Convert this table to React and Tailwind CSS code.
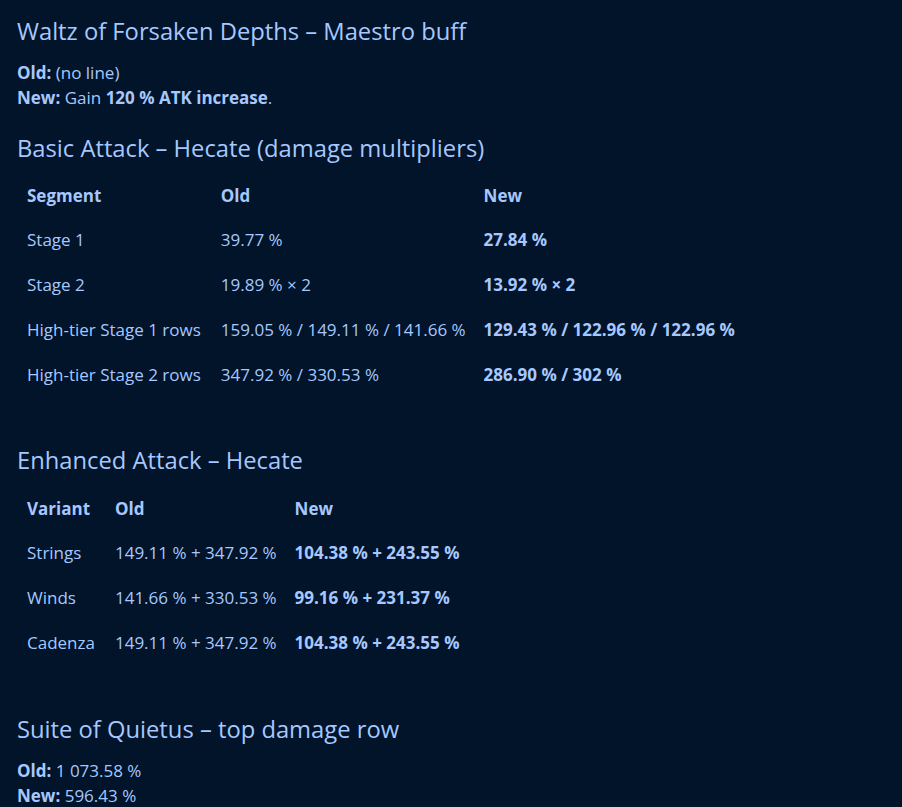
const basicRows = [
  ['Stage 1', '39.77 %', '27.84 %'],
  ['Stage 2', '19.89 % × 2', '13.92 % × 2'],
  ['High-tier Stage 1 rows', '159.05 % / 149.11 % / 141.66 %', '129.43 % / 122.96 % / 122.96 %'],
  ['High-tier Stage 2 rows', '347.92 % / 330.53 %', '286.90 % / 302 %'],
];

const enhancedRows = [
  ['Strings', '149.11 % + 347.92 %', '104.38 % + 243.55 %'],
  ['Winds', '141.66 % + 330.53 %', '99.16 % + 231.37 %'],
  ['Cadenza', '149.11 % + 347.92 %', '104.38 % + 243.55 %'],
];

function Heading({ children, className = '' }) {
  return (
    <h2 className={`text-[23.75px] leading-[32px] font-normal ${className}`}>
      {children}
    </h2>
  );
}

function DiffTable({ head, rows, className = '' }) {
  return (
    <table className={`border-collapse ${className}`}>
      <thead>
        <tr>
          {head.map((h) => (
            <th key={h} className="px-[10px] pt-[10px] pb-[9px] text-left font-bold leading-[25px]">
              {h}
            </th>
          ))}
        </tr>
      </thead>
      <tbody>
        {rows.map(([label, oldVal, newVal]) => (
          <tr key={label}>
            <td className="px-[10px] py-[10px] leading-[25px] whitespace-nowrap">{label}</td>
            <td className="pl-[10px] pr-[8px] py-[10px] leading-[25px] whitespace-nowrap">{oldVal}</td>
            <td className="px-[10px] py-[10px] leading-[25px] whitespace-nowrap font-bold">{newVal}</td>
          </tr>
        ))}
      </tbody>
    </table>
  );
}

export default function App() {
  return (
    <div
      className="min-h-screen bg-[#011429] px-[17px] pt-[15px] text-[17px] text-[#a6c8ff]"
      style={{ fontFamily: '"Open Sans", sans-serif' }}
    >
      <Heading>Waltz of Forsaken Depths – Maestro buff</Heading>
      <div className="mt-[13px] leading-[25px]">
        <p><b>Old:</b> (no line)</p>
        <p>
          <b>New:</b> Gain <b>120 % ATK increase</b>.
        </p>
      </div>

      <Heading className="mt-[22px]">Basic Attack – Hecate (damage multipliers)</Heading>
      <DiffTable className="mt-[9px]" head={['Segment', 'Old', 'New']} rows={basicRows} />

      <Heading className="mt-[47px]">Enhanced Attack – Hecate</Heading>
      <DiffTable className="mt-[10px]" head={['Variant', 'Old', 'New']} rows={enhancedRows} />

      <Heading className="mt-[48px]">Suite of Quietus – top damage row</Heading>
      <div className="mt-[13px] leading-[25px]">
        <p><b>Old:</b> 1 073.58 %</p>
        <p><b>New:</b> 596.43 %</p>
      </div>
    </div>
  );
}
